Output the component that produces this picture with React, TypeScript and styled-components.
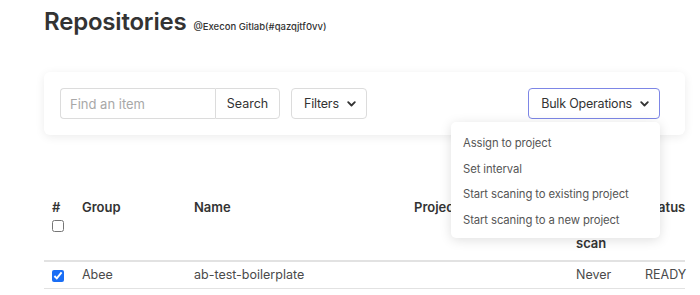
import React, { useState } from 'react'
import styled, { createGlobalStyle } from 'styled-components'

const colors = {
  text: '#333333',
  muted: '#4a4a4a',
  menu: '#555555',
  border: '#dcdcdc',
  placeholder: '#a8a8a8',
  focus: '#7d86e6',
  line: '#e2e2e2'
}

const GlobalStyle = createGlobalStyle`
  body {
    margin: 0;
    background: #ffffff;
    font-family: Inter, 'Liberation Sans', Arial, sans-serif;
    color: ${colors.text};
  }
`

const Chevron: React.FC = () => (
  <svg width="9" height="6" viewBox="0 0 9 6" fill="none">
    <polyline points="1.2,1.2 4.5,4.5 7.8,1.2" stroke="#333" strokeWidth="1.8" strokeLinecap="round" strokeLinejoin="round" />
  </svg>
)

const bulkItems = ['Assign to project', 'Set interval', 'Start scaning to existing project', 'Start scaning to a new project']

const rows = [{ id: 1, checked: true, group: 'Abee', name: 'ab-test-boilerplate', project: '', lastScan: 'Never', status: 'READY' }]

export default function App() {
  const [open] = useState(true)

  return (
    <>
      <GlobalStyle />
      <S.Page>
        <S.Header>
          <S.Title>Repositories</S.Title>
          <S.Subtitle>@Execon Gitlab(#qazqjtf0vv)</S.Subtitle>
        </S.Header>

        <S.Card>
          <S.SearchGroup>
            <S.Input placeholder="Find an item" />
            <S.SearchButton>Search</S.SearchButton>
          </S.SearchGroup>
          <S.Button>
            Filters <Chevron />
          </S.Button>
          <S.Spacer />
          <S.BulkWrap>
            <S.Button focused>
              Bulk Operations <Chevron />
            </S.Button>
            {open && (
              <S.Menu>
                {bulkItems.map(item => (
                  <S.MenuItem key={item}>{item}</S.MenuItem>
                ))}
              </S.Menu>
            )}
          </S.BulkWrap>
        </S.Card>

        <S.Table>
          <colgroup>
            <col style={{ width: 30 }} />
            <col style={{ width: 112 }} />
            <col style={{ width: 220 }} />
            <col style={{ width: 162 }} />
            <col style={{ width: 69 }} />
            <col />
          </colgroup>
          <thead>
            <tr>
              <S.Th>
                #
                <br />
                <S.Check type="checkbox" />
              </S.Th>
              <S.Th>Group</S.Th>
              <S.Th>Name</S.Th>
              <S.Th>Project</S.Th>
              <S.Th>Last successful scan</S.Th>
              <S.Th>Status</S.Th>
            </tr>
          </thead>
          <tbody>
            {rows.map(row => (
              <tr key={row.id}>
                <S.Td>
                  <S.Check type="checkbox" defaultChecked={row.checked} />
                </S.Td>
                <S.Td>{row.group}</S.Td>
                <S.Td>{row.name}</S.Td>
                <S.Td>{row.project}</S.Td>
                <S.Td>{row.lastScan}</S.Td>
                <S.Td>{row.status}</S.Td>
              </tr>
            ))}
          </tbody>
        </S.Table>
      </S.Page>
    </>
  )
}

const S = {
  Page: styled.div`
    padding: 0 15px 0 44px;
  `,
  Header: styled.div`
    display: flex;
    align-items: baseline;
    gap: 7px;
    padding-top: 7px;
    height: 38px;
  `,
  Title: styled.h1`
    margin: 0;
    font-size: 24px;
    font-weight: 600;
    letter-spacing: -0.2px;
    color: ${colors.text};
  `,
  Subtitle: styled.span`
    font-size: 9.5px;
    font-weight: 500;
    color: ${colors.text};
  `,
  Card: styled.div`
    margin-top: 27px;
    display: flex;
    align-items: center;
    gap: 11px;
    padding: 16px 25px 16px 16px;
    background: #fff;
    border-radius: 6px;
    box-shadow: 0 2px 10px rgba(0, 0, 0, 0.08);
  `,
  SearchGroup: styled.div`
    display: flex;
  `,
  Input: styled.input`
    box-sizing: border-box;
    width: 155px;
    height: 31px;
    padding: 0 9px;
    border: 1px solid ${colors.border};
    border-right: none;
    border-radius: 4px 0 0 4px;
    font-family: inherit;
    font-size: 13px;
    color: ${colors.text};
    outline: none;
    &::placeholder {
      color: ${colors.placeholder};
    }
  `,
  SearchButton: styled.button`
    box-sizing: border-box;
    height: 31px;
    width: 65px;
    border: 1px solid ${colors.border};
    border-radius: 0 4px 4px 0;
    background: #fff;
    font-family: inherit;
    font-size: 12.5px;
    color: ${colors.text};
  `,
  Button: styled.button<{ focused?: boolean }>`
    box-sizing: border-box;
    height: 31px;
    display: flex;
    align-items: center;
    gap: 8px;
    padding: 0 10px 0 12px;
    border: 1px solid ${p => (p.focused ? colors.focus : colors.border)};
    border-radius: 4px;
    background: #fff;
    font-family: inherit;
    font-size: 12.5px;
    letter-spacing: -0.2px;
    color: ${colors.text};
  `,
  Spacer: styled.div`
    flex: 1;
  `,
  BulkWrap: styled.div`
    position: relative;
  `,
  Menu: styled.div`
    position: absolute;
    top: 34px;
    right: 0;
    width: 209px;
    padding: 9px 0 5px;
    background: #fff;
    border-radius: 5px;
    box-shadow: 0 2px 12px rgba(0, 0, 0, 0.13);
    z-index: 10;
  `,
  MenuItem: styled.div`
    padding: 0 12px;
    height: 25.5px;
    line-height: 25.5px;
    font-size: 11.3px;
    letter-spacing: -0.1px;
    color: ${colors.menu};
    white-space: nowrap;
  `,
  Table: styled.table`
    margin-top: 55px;
    width: 100%;
    table-layout: fixed;
    border-collapse: collapse;
    font-size: 13px;
  `,
  Th: styled.th`
    text-align: left;
    vertical-align: top;
    padding: 8px;
    line-height: 18px;
    font-weight: 600;
    color: ${colors.text};
    border-bottom: 2px solid ${colors.line};
    &:last-child {
      padding-right: 0;
    }
  `,
  Td: styled.td`
    padding: 4px 8px;
    line-height: 18px;
    font-size: 12.5px;
    color: ${colors.muted};
    border-bottom: 1px solid ${colors.line};
  `,
  Check: styled.input`
    margin: 0;
    width: 12px;
    height: 12px;
    vertical-align: middle;
    accent-color: #1a6ef5;
  `
}
